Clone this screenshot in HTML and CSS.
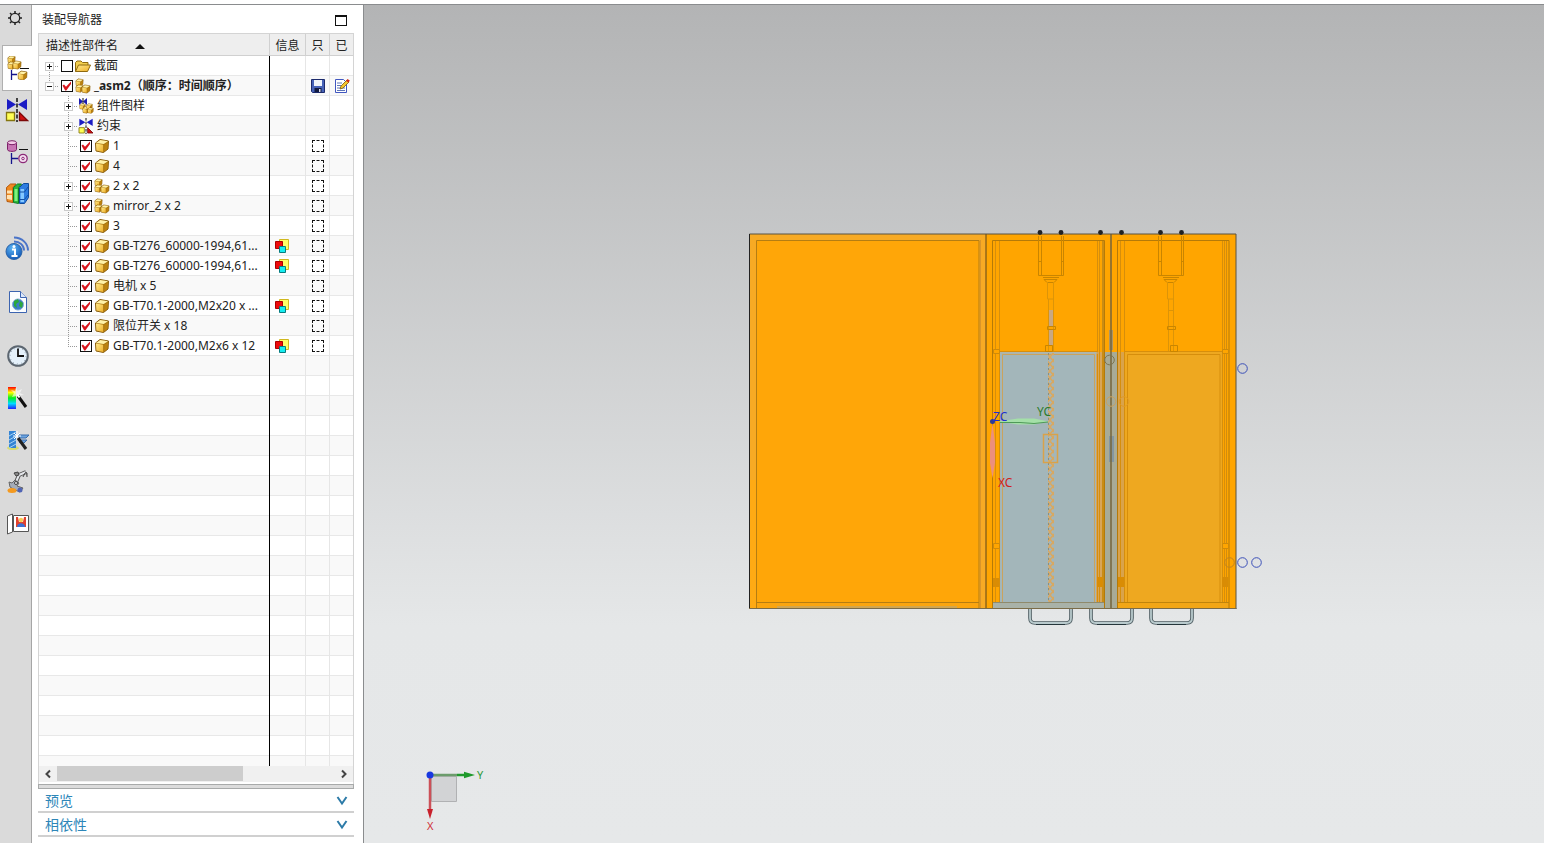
FILE: index.html
```html
<!DOCTYPE html>
<html lang="zh-CN">
<head>
  <meta charset="UTF-8">
  <meta name="viewport" content="width=device-width, initial-scale=1.0">
  <title>装配导航器</title>
  <link rel="stylesheet" href="styles.css">
</head>
<body>
  <svg class="defs" aria-hidden="true">
    <defs>
      <linearGradient id="gold" x1="0" y1="0" x2="1" y2="1">
        <stop offset="0" stop-color="#ffe98a"/>
        <stop offset="1" stop-color="#eeb02a"/>
      </linearGradient>
      <linearGradient id="rainbow" x1="0" y1="0" x2="0" y2="1">
        <stop offset="0" stop-color="#f00"/>
        <stop offset=".25" stop-color="#ff0"/>
        <stop offset=".5" stop-color="#0e2"/>
        <stop offset=".75" stop-color="#0df"/>
        <stop offset="1" stop-color="#22f"/>
      </linearGradient>
      <radialGradient id="ball" cx=".4" cy=".3" r=".8">
        <stop offset="0" stop-color="#5cb4f4"/>
        <stop offset="1" stop-color="#0b4fb0"/>
      </radialGradient>
      <symbol id="cube" viewBox="0 0 16 16">
        <path d="M1.500 5L6 1.500L14.500 3L14 11L9.500 14.500L2 13Z" fill="#a87410" stroke="#8a5e0c"/>
        <path d="M2 5L6.200 2L14 3.300L9.700 6Z" fill="#fff2a8"/>
        <path d="M2 5.600L9.200 6.800V14L2.400 12.600Z" fill="url(#gold)"/>
        <path d="M10.200 6.800L14 4.300L13.500 10.800L10.200 13.500Z" fill="#bc8210"/>
      </symbol>
      <symbol id="asm" viewBox="0 0 16 16">
        <use href="#cube" x="0" y="0" width="9" height="9"/>
        <use href="#cube" x="0" y="6" width="9" height="9"/>
        <use href="#cube" x="6" y="6" width="10" height="10"/>
      </symbol>
      <symbol id="folder" viewBox="0 0 16 16">
        <path d="M.5 13.500V4.500L2 3h4l1.500 1.500H13V7" fill="#f3cf4e" stroke="#8f6a10"/>
        <path d="M.5 13.500L3.500 7h12l-3 6.500Z" fill="url(#gold)" stroke="#8f6a10"/>
      </symbol>
      <symbol id="pattern" viewBox="0 0 16 16">
        <path d="M1 0l4 3.500L1 7zM9 0L5 3.500L9 7z" fill="#1c1cae"/>
        <path d="M5 0v8" stroke="#111"/>
        <use href="#cube" x="1" y="5" width="7" height="7"/>
        <use href="#cube" x="4" y="8" width="8" height="8"/>
        <use href="#cube" x="8" y="5" width="7" height="7"/>
        <use href="#cube" x="9" y="9" width="7" height="7"/>
      </symbol>
      <symbol id="constraint" viewBox="0 0 24 24">
        <path d="M2 1l9 5.500L2 12zM22 1l-9 5.500L22 12z" fill="#1c1cc4"/>
        <path d="M12 0v24" stroke="#111" stroke-width="1.500" stroke-dasharray="4 1.500"/>
        <path d="M1.500 14.500h8v8h-8z" fill="#ffff54" stroke="#857610" stroke-width="1.300"/>
        <path d="M14.500 14.500v8h8z" fill="#d11010" stroke="#7c0808" stroke-width="1.300"/>
      </symbol>
      <symbol id="save" viewBox="0 0 16 16">
        <path d="M1.500 1.500h13v13h-12l-1-1z" fill="#4662b8" stroke="#1c2a6c"/>
        <path d="M4 2h8v6H4z" fill="#eef3fa"/>
        <path d="M4.500 10h7v4h-7z" fill="#111a40"/>
        <path d="M9 11h1.500v3H9z" fill="#dde"/>
      </symbol>
      <symbol id="edit" viewBox="0 0 16 16">
        <path d="M1.500 1.500h8l3 3v10h-11z" fill="#fff" stroke="#4157c0"/>
        <path d="M3 5h5M3 7.500h4M3 10h8M3 12.500h8" stroke="#5e75b8"/>
        <path d="M6 11l1-3 6-6 2 2-6 6z" fill="#f5c52c" stroke="#7c5a10" stroke-width=".8"/>
        <path d="M12 3l1.500-2 2.300 1.500L14.500 4.500z" fill="#d02818"/>
      </symbol>
      <symbol id="status" viewBox="0 0 16 16">
        <path d="M5.500 1.500h9v10h-9z" fill="#ffff66" stroke="#d0b820"/>
        <path d="M1.500 3.500h7v7h-7z" fill="#ee0c0c" stroke="#a00"/>
        <path d="M5.500 8.500h6v6h-6z" fill="#15eef0" stroke="#087c80"/>
      </symbol>
    </defs>
  </svg>

  <div class="top-edge"></div>
  <div class="app">
    <nav class="resource-bar" aria-label="资源条">
      <button class="gear" type="button" aria-label="选项">
        <svg width="14" height="14" viewBox="0 0 14 14"><circle cx="7" cy="7" r="4.700" fill="none" stroke="#222" stroke-width="1.300"/><path d="M7 0v2.500M7 11.500V14M0 7h2.500M11.500 7H14M2 2l1.800 1.800M10.200 10.200L12 12M12 2l-1.800 1.800M3.800 10.200L2 12" stroke="#222" stroke-width="1.500"/></svg>
      </button>
      <button class="tab active" type="button" aria-label="装配导航器">
        <svg width="24" height="24" viewBox="0 0 24 24"><use href="#cube" x="2" y="-1" width="9" height="9"/><use href="#cube" x="2" y="5" width="9" height="9"/><use href="#cube" x="7" y="4" width="10" height="10"/><path d="M15 12.500h9" stroke="#111"/><path d="M6.500 14v10M7 18.500h5" stroke="#14148c" stroke-width="1.300"/><use href="#cube" x="12" y="14" width="11" height="11"/></svg>
      </button>
      <button class="tab" type="button" aria-label="约束导航器">
        <svg width="24" height="24"><use href="#constraint"/></svg>
      </button>
      <button class="tab" type="button" aria-label="部件导航器">
        <svg width="24" height="24" viewBox="0 0 24 24"><path d="M2.500 2.500v7c0 2.500 9 2.500 9 0v-7" fill="#c874b4" stroke="#7c2068"/><ellipse cx="7" cy="2.700" rx="4.500" ry="2" fill="#f4cce8" stroke="#7c2068"/><path d="M14 9.500h9" stroke="#111"/><path d="M6.500 13v11M7 18.500h6" stroke="#14148c" stroke-width="1.300"/><circle cx="18" cy="18.500" r="4.200" fill="#f4dff0" stroke="#8c2a78" stroke-width="1.300"/><circle cx="18" cy="18.500" r="1.300" fill="none" stroke="#8c2a78"/></svg>
      </button>
      <button class="tab" type="button" aria-label="重用库">
        <svg width="24" height="24" viewBox="0 0 24 24"><path d="M1.500 5.500l4-3.500h5.500l-3 3.500v15l-6-1z" fill="#f08a20" stroke="#b4580c"/><path d="M2 8.500h5v3H2zM2 13h5v5l-5-1z" fill="#ffe2b0"/><path d="M8.500 5.500l4-3.500h4l-3 3.500v16l-5-1z" fill="#2cb83c" stroke="#0c7c20"/><path d="M9.500 7h3v12h-3z" fill="#7cf47c"/><path d="M14.500 5.500l4-4h5v14l-4 6h-5z" fill="#2c7ce0" stroke="#104c9c"/><path d="M15.500 7h3.500v13h-3.500z" fill="#84c8ff"/><path d="M15 10h4.500l3.500-5M15 17.500h4.500l3.500-4.500" fill="none" stroke="#1450a4"/></svg>
      </button>
      <button class="tab spaced" type="button" aria-label="HD3D 工具">
        <svg width="24" height="24" viewBox="0 0 24 24"><path d="M9 1.500c8 0 14 6 14 13M9 5.500c6 0 10 4 10 9" fill="none" stroke="#4a74c8" stroke-width="2"/><circle cx="9" cy="15.500" r="8" fill="url(#ball)" stroke="#2c64a8"/><path d="M7 13.500h3v6M6.500 20h6" fill="none" stroke="#fff" stroke-width="2"/><circle cx="9" cy="10.500" r="1.500" fill="#fff"/></svg>
      </button>
      <button class="tab spaced" type="button" aria-label="Web 浏览器">
        <svg width="24" height="24" viewBox="0 0 24 24"><path d="M4.500 1.500h11l6 6v15h-17z" fill="#fbfdff" stroke="#3c64b0"/><path d="M15.500 1.500v6h6" fill="#dce8fa" stroke="#3c64b0"/><circle cx="13" cy="14.500" r="5.500" fill="#3c7cc8" stroke="#84aad4"/><path d="M9 11l4-2 1 3-3 2 1 4-3-2zM15 11l3 2-1 5-3-2z" fill="#2ca83c"/></svg>
      </button>
      <button class="tab spaced" type="button" aria-label="历史记录">
        <svg width="24" height="24" viewBox="0 0 24 24"><circle cx="13" cy="12" r="9.800" fill="#e4f0fa" stroke="#5c6670" stroke-width="2"/><circle cx="13" cy="12" r="8" fill="none" stroke="#8898a8" stroke-dasharray="1 3.190"/><path d="M13 4.500V12h6" fill="none" stroke="#111" stroke-width="1.800"/></svg>
      </button>
      <button class="tab" type="button" aria-label="Process Studio">
        <svg width="24" height="24" viewBox="0 0 24 24"><path d="M3 1h8v22H3z" fill="url(#rainbow)"/><path d="M11 1l1.500 4L17 3l-2 4 4 2-5 .5L12 14l-1-4-4 1 2-4-3-3 4 1z" fill="#fff" opacity=".6"/><path d="M13 10l8 11" stroke="#111" stroke-width="3"/><path d="M12.500 8.500l2 3" stroke="#fff" stroke-width="2"/></svg>
      </button>
      <button class="tab" type="button" aria-label="加工向导">
        <svg width="24" height="24" viewBox="0 0 24 24"><ellipse cx="8" cy="20" rx="6" ry="2" fill="#d8dc70"/><path d="M4 3h7v17H4z" fill="#3484d4"/><path d="M4 8l7-4M4 12l7-4M4 16l7-4M4 20l7-4" stroke="#a8d4f4"/><path d="M13 7h11l-3 3h-7zM14 12h8l-3 3h-4z" fill="#6ca4e0" stroke="#386cac"/><path d="M12 3v9M8 8h8M9 5l6 6M15 5l-6 6" stroke="#fff"/><path d="M13 10l8 11" stroke="#222" stroke-width="3"/></svg>
      </button>
      <button class="tab" type="button" aria-label="机器人">
        <svg width="24" height="24" viewBox="0 0 24 24"><path d="M11 12l3-7M14 5l7-3" stroke="#555" stroke-width="4"/><path d="M11 12l3-7M14 5l7-3" stroke="#e4e6ea" stroke-width="2"/><path d="M9 3l4-1 1 3-3 1zM20 2l2 1v4M20 3l-2 4" fill="#888" stroke="#444"/><path d="M4 12l3 1 3-3 4 3-2 3 6 2-3 4-5-2-5-3z" fill="#a4acb8" stroke="#666"/><ellipse cx="7" cy="20.500" rx="4.500" ry="2.500" fill="#f49a20"/><circle cx="15" cy="20" r="2.500" fill="#5064b4"/><circle cx="11" cy="13" r="1.500" fill="#eee" stroke="#444"/></svg>
      </button>
      <button class="tab" type="button" aria-label="角色">
        <svg width="24" height="24" viewBox="0 0 24 24"><path d="M2.500 4l5-2v18l-5 2z" fill="#fff" stroke="#555"/><path d="M8.500 3.500h15v16h-15z" fill="#fff" stroke="#555"/><path d="M11 5h10v10H11z" fill="#e2412c"/><path d="M13 5h6l-1 5h-4z" fill="#fff"/><circle cx="16" cy="8" r="2.200" fill="#f8cc54"/><path d="M12 15c0-5 8-5 8 0z" fill="#3c70d4"/></svg>
      </button>
    </nav>

    <aside class="panel">
      <header class="panel-title">
        <h1>装配导航器</h1>
        <button class="maximize" type="button" aria-label="最大化"></button>
      </header>

      <div class="tree-frame">
        <div class="tree-view">
          <table class="tree">
            <colgroup>
              <col>
              <col class="col-info">
              <col class="col-flag">
              <col class="col-last">
            </colgroup>
            <thead>
              <tr>
                <th>描述性部件名 <span class="sort"></span></th>
                <th>信息</th>
                <th>只</th>
                <th>已</th>
              </tr>
            </thead>
            <tbody id="treeBody"></tbody>
          </table>
        </div>
        <div class="scrollbar">
          <button type="button" aria-label="向左"><svg width="8" height="10" viewBox="0 0 8 10"><path d="M6 1.500L2.500 5L6 8.500" fill="none" stroke="#444" stroke-width="2"/></svg></button>
          <div class="track"><div class="thumb"></div></div>
          <button type="button" aria-label="向右"><svg width="8" height="10" viewBox="0 0 8 10"><path d="M2 1.500L5.500 5L2 8.500" fill="none" stroke="#444" stroke-width="2"/></svg></button>
        </div>
      </div>
      <div class="splitter"></div>
      <button class="section" type="button">预览 <svg width="12" height="10" viewBox="0 0 12 10"><path d="M1.500 1L6 7.500l4.500-6.500" fill="none" stroke="#2d7ba8" stroke-width="2"/></svg></button>
      <button class="section" type="button">相依性 <svg width="12" height="10" viewBox="0 0 12 10"><path d="M1.500 1L6 7.500l4.500-6.500" fill="none" stroke="#2d7ba8" stroke-width="2"/></svg></button>
    </aside>

    <main class="viewport">
      <svg class="scene" viewBox="364 5 1180 838" role="img" aria-label="_asm2">
        <defs>
          <pattern id="thread" width="6" height="7" patternUnits="userSpaceOnUse">
            <path d="M0 0l6 7M0 7l6-7" stroke="#d9a860" stroke-width="1.500"/>
          </pattern>
          <g id="motor" fill="none" stroke="#c98500">
            <path d="M1038.500 236v39.500h25V236M1041.500 236v39M1061.500 236v39" />
            <path d="M1038 261.500h4M1061 261.500h3"/>
            <path d="M1043 277.500h16M1044 279.500h13l-3 3h-7z"/>
            <path d="M1047.500 282v17h6v-17M1048.500 299v52M1053.500 299v52M1048 310.500h6" stroke="#dc9408"/>
            <path d="M1047.500 326.500h8v3h-8z"/>
          </g>
          <g id="handle" fill="none">
            <path d="M1030 609v9q0 5 5 5h31q5 0 5-5v-9" stroke="#4c5b60" stroke-width="3.600"/>
            <path d="M1030 609v9q0 5 5 5h31q5 0 5-5v-9" stroke="#b9cacd" stroke-width="1.800"/>
            <path d="M1036 624.500h29" stroke="#26363c"/>
          </g>
        </defs>

        <!-- left cabinet -->
        <path d="M749.500 234h236.500v375H749.500z" fill="#f7aa24"/>
        <path d="M750 480h6v128h-6z" fill="#ffaa14"/>
        <path d="M756 241h223v361H756z" fill="#ffa608"/>
        <path d="M756 602h223v6H756z" fill="#fba50f"/>
        <path d="M777 606h180v2H777z" fill="#d2a650"/>
        <path d="M756.500 608V240.500h222.500V608M756 602.500h223" fill="none" stroke="#b57d12"/>
        <path d="M980.500 240v368" stroke="#d9952a"/>

        <!-- middle and right cabinets -->
        <path d="M986 234h250v375H986z" fill="#ffa500"/>
        <path d="M1104 352h14v256h-14z" fill="#a8ab97"/>
        <path d="M1096 352h8v250h-8z" fill="#d8a558"/>
        <path d="M1118 352h7v250h-7z" fill="#d9a34c"/>
        <path d="M1000 352h96v250h-96z" fill="#a3b6ba"/>
        <path d="M993 602h111v6H993z" fill="#a9b2a8"/>
        <path d="M1125 352h97v250h-97z" fill="#eea820"/>
        <path d="M1118 602h111v6h-111z" fill="#f2a616"/>
        <g fill="none" stroke="#b57a08">
          <path d="M992.500 608V240.500h112V608M1117.500 608V240.500h111.500V608"/>
          <path d="M993 602.500h111" stroke="#8f8a6c"/>
          <path d="M1118 602.500h111" stroke="#bf840c"/>
          <path d="M1103 241v361" stroke="#c98c14" stroke-width="2"/>
        </g>
        <g fill="none" stroke="#d68e0c">
          <path d="M995.500 241v361M999.500 241v361M1097.500 241v361M1099.500 241v361"/>
          <path d="M1120.500 241v361M1124.500 241v361M1222.500 241v361M1224.500 241v361"/>
          <path d="M1000 351.500h98M1124 351.500h98M1127.500 602V354.500h92.500V602"/>
          <path d="M1002.500 602V354.500h92V602" stroke="#c9a35e"/>
        </g>
        <path d="M1000 353h98" stroke="#b8b4a0"/>
        <path d="M1226.500 241v361" stroke="#d08c10"/>
        <g fill="#ffa500" stroke="#d08a08">
          <path d="M993.500 349.500h6v4h-6zM1222.500 349.500h6v4h-6zM993.500 543.500h6v5h-6zM1222.500 543.500h6v5h-6z"/>
        </g>
        <path d="M993 578h6v9h-6zM1097 577h6v10h-6zM1118 577h6v10h-6zM1222 577h6v10h-6z" fill="#d98c04"/>

        <use href="#motor"/>
        <use href="#motor" x="120"/>
        <path d="M1045.500 345.500h7v6h-7zM1170.500 345.500h7v6h-7z" fill="none" stroke="#c98500"/>
        <path d="M1049 310h4v16h-4zM1049 330h4v15h-4z" fill="#c9a882"/>
        <path d="M1048 353h6v249h-6z" fill="url(#thread)"/>
        <path d="M1048.500 353v249" stroke="#8a8f80" stroke-dasharray="2 3"/>
        <path d="M1043.500 434.500h14v28h-14z" fill="none" stroke="#d9a24a" stroke-width="1.500"/>

        <path d="M1109 330h4v20h-4z" fill="#a89468"/>
        <path d="M1109 436h5v26h-5z" fill="#8496a0"/>
        <g fill="none">
          <path d="M1111 234v375" stroke="#75643c" stroke-width="1.500"/>
          <path d="M986 234v375" stroke="#5c4618"/>
          <path d="M749.500 609V234h486.500v375" stroke="#5b5340"/>
          <path d="M749.500 234v375" stroke="#222"/>
          <path d="M749 608.500h487.500" stroke="#7b6c48"/>
        </g>

        <g fill="#222">
          <circle cx="1040" cy="232.500" r="2.400"/>
          <circle cx="1061" cy="232.500" r="2.400"/>
          <circle cx="1100.500" cy="232.500" r="2.400"/>
          <circle cx="1121.500" cy="232.500" r="2.400"/>
          <circle cx="1160.500" cy="232.500" r="2.400"/>
          <circle cx="1181.500" cy="232.500" r="2.400"/>
        </g>
        <use href="#handle"/>
        <use href="#handle" x="61"/>
        <use href="#handle" x="121"/>

        <g fill="none" stroke="#3a4fb8">
          <circle cx="1242.500" cy="368.500" r="4.800"/>
          <circle cx="1242.500" cy="562.500" r="4.800"/>
          <circle cx="1256.500" cy="562.500" r="4.800"/>
          <circle cx="1109.500" cy="360" r="4.800" stroke="#7c7450"/>
          <circle cx="1229.500" cy="562.500" r="4.800" stroke="#c08420"/>
          <circle cx="1111" cy="401.500" r="4.800" stroke="#c8a260"/>
          <circle cx="1124" cy="401.500" r="4.800" stroke="#e09a28"/>
        </g>

        <!-- work coordinate system -->
        <path d="M998 421.500L1018 418.500H1034L1049 421.500L1034 424.500H1018Z" fill="#a4e0a8"/>
        <path d="M1000 422.500h20l14 1 14-1.500" fill="none" stroke="#4e9a58"/>
        <path d="M992.500 423l2.500 20v20l-2.500 15-2.500-15v-20z" fill="#ec8f7c"/>
        <circle cx="992.500" cy="421.500" r="2.500" fill="#2c3c94"/>
        <text x="993" y="421" fill="#1f2fd0">ZC</text>
        <text x="1037" y="416" fill="#2c7c2c">YC</text>
        <text x="998" y="487" fill="#d02020">XC</text>

        <!-- view triad -->
        <path d="M431.500 776.500h25v25h-25z" fill="#d2d3d5" stroke="#b0b1b3"/>
        <path d="M431 775h26" stroke="#6c9c6c" stroke-width="2.500"/>
        <path d="M457 773.800l7 0v-2l11 3.200-11 3.200v-2h-7z" fill="#1f9a2c"/>
        <path d="M430 777v32" stroke="#cc5058" stroke-width="2.500"/>
        <path d="M427 809h6l-3 10z" fill="#c8202c"/>
        <circle cx="430" cy="775" r="3.500" fill="#1838e0"/>
        <text class="small" x="477" y="779" fill="#2f9a3c">Y</text>
        <text class="small" x="427" y="830" fill="#d03038">X</text>
      </svg>
    </main>
  </div>

  <script>
    var parts = [
      { name: '截面', level: 0, icon: 'folder', check: false, expand: '+' },
      { name: '_asm2（顺序：时间顺序）', level: 0, icon: 'asm', check: true, expand: '-', root: true },
      { name: '组件图样', level: 1, icon: 'pattern', expand: '+' },
      { name: '约束', level: 1, icon: 'constraint', expand: '+' },
      { name: '1', level: 1, icon: 'cube', check: true },
      { name: '4', level: 1, icon: 'cube', check: true },
      { name: '2 x 2', level: 1, icon: 'asm', check: true, expand: '+' },
      { name: 'mirror_2 x 2', level: 1, icon: 'asm', check: true, expand: '+' },
      { name: '3', level: 1, icon: 'cube', check: true },
      { name: 'GB-T276_60000-1994,61...', level: 1, icon: 'cube', check: true, status: true },
      { name: 'GB-T276_60000-1994,61...', level: 1, icon: 'cube', check: true, status: true },
      { name: '电机 x 5', level: 1, icon: 'cube', check: true },
      { name: 'GB-T70.1-2000,M2x20 x ...', level: 1, icon: 'cube', check: true, status: true },
      { name: '限位开关 x 18', level: 1, icon: 'cube', check: true },
      { name: 'GB-T70.1-2000,M2x6 x 12', level: 1, icon: 'cube', check: true, status: true }
    ];

    function icon(id) {
      return '<svg class="icon" width="16" height="16"><use href="#' + id + '"/></svg>';
    }

    function guide(part, i) {
      var cls = 'guide';
      if (i === 0) cls += ' first';
      if (i === 1 || i === parts.length - 1) cls += ' last';
      if (part.check === undefined) cls += ' narrow';
      var button = '';
      if (part.expand) {
        button = '<button type="button" class="expander' + (part.expand === '+' ? ' closed' : '') + '" aria-label="展开"></button>';
      }
      return '<span class="' + cls + '">' + button + '</span>';
    }

    var html = '';
    parts.forEach(function(part, i) {
      var box = '';
      if (part.check !== undefined) {
        box = '<input type="checkbox" id="part' + i + '"' + (part.check ? ' checked' : '') + '>';
      }
      var name = part.check !== undefined ? '<label for="part' + i + '">' + part.name + '</label>' : '<span>' + part.name + '</span>';
      var flag = part.root ? icon('save') : (part.level === 1 && box ? '<span class="dashed"></span>' : '');
      html += '<tr><td><div class="node level' + part.level + (part.root ? ' root' : '') + '">' +
        guide(part, i) + box + icon(part.icon) + name + '</div></td>' +
        '<td>' + (part.status ? icon('status') : '') + '</td>' +
        '<td>' + flag + '</td>' +
        '<td>' + (part.root ? icon('edit') : '') + '</td></tr>';
    });
    // empty rows down to the bottom of the list
    for (var i = 0; i < 60; i++) {
      html += '<tr><td></td><td></td><td></td><td></td></tr>';
    }
    document.getElementById('treeBody').innerHTML = html;
  </script>
</body>
</html>
```

FILE: styles.css
```css
* {
  box-sizing: border-box;
}
body {
  margin: 0;
  height: 100vh;
  display: flex;
  flex-direction: column;
  overflow: hidden;
  background: #fff;
  color: #222;
  font-family: "Noto Sans", "Noto Sans CJK SC", sans-serif;
  font-size: 12px;
  line-height: 20px;
}
button {
  border: none;
  padding: 0;
  background: none;
  font: inherit;
  color: inherit;
}
svg {
  display: block;
}
.defs {
  position: absolute;
  width: 0;
  height: 0;
}
.top-edge {
  flex: none;
  height: 5px;
  border-bottom: 1px solid #8a8c8e;
}
.app {
  flex: 1;
  min-height: 0;
  display: flex;
}

/* resource bar */
.resource-bar {
  flex: none;
  width: 32px;
  padding-left: 2px;
  display: flex;
  flex-direction: column;
  background: #dadada;
  border-right: 1px solid #a6a6a6;
}
.gear {
  width: 26px;
  height: 26px;
  margin-bottom: 14px;
  display: flex;
  align-items: center;
  justify-content: center;
}
.tab {
  flex: none;
  height: 42px;
  padding-left: 3px;
  display: flex;
  align-items: center;
}
.tab.active {
  height: 46px;
  margin-right: -1px;
  margin-bottom: -2px;
  background: #fff;
  border: 1px solid #b0b0b0;
  border-right: none;
  padding-left: 2px;
}
.tab.spaced {
  margin-top: 12px;
}

/* navigator panel */
.panel {
  flex: none;
  width: 332px;
  padding: 0 9px 6px 6px;
  display: flex;
  flex-direction: column;
  background: #fff;
  border-right: 1px solid #8a8c8e;
}
.panel-title {
  height: 28px;
  padding: 2px 7px 0 4px;
  display: flex;
  align-items: center;
  justify-content: space-between;
}
.panel-title h1 {
  margin: 0;
  font-size: 12px;
  font-weight: normal;
}
.maximize {
  width: 12px;
  height: 11px;
  border: 1px solid #111;
  border-top-width: 2px;
}
.tree-frame {
  flex: 1;
  min-height: 0;
  display: flex;
  flex-direction: column;
  border: 1px solid #d4d4d4;
  border-bottom: none;
}
.tree-view {
  flex: 1;
  min-height: 0;
  overflow: hidden;
}
.tree {
  width: 100%;
  table-layout: fixed;
  border-collapse: separate;
  border-spacing: 0;
}
.col-info {
  width: 36px;
}
.col-flag {
  width: 24px;
}
.col-last {
  width: 23px;
}
.tree th {
  height: 22px;
  padding: 1px 0 0;
  line-height: 20px;
  font-weight: normal;
  background: #eee;
  border-right: 1px solid #d0d0d0;
  box-shadow: inset 0 -1px #d0d0d0;
}
.tree th:first-child {
  padding-left: 7px;
  text-align: left;
}
.sort {
  display: inline-block;
  margin-left: 14px;
  vertical-align: middle;
  border: 5px solid transparent;
  border-top: none;
  border-bottom-color: #111;
}
.tree td {
  height: 20px;
  padding: 0;
  border-right: 1px solid #e6e6e6;
  box-shadow: inset 0 -1px #e8e8e8;
}
.tree td:first-child {
  border-right-color: #000;
}
.tree th:last-child,
.tree td:last-child {
  border-right: none;
}
.tree tr:nth-child(even) td {
  background: #f9f9f9;
}
.tree td > .icon,
.dashed {
  margin: 0 auto;
}
.tree td:nth-child(2) > .icon {
  margin-left: 4px;
}
.dashed {
  display: block;
  width: 12px;
  height: 12px;
  border: 1px dashed #111;
}

.node {
  height: 20px;
  display: flex;
  align-items: center;
  white-space: nowrap;
}
.node.level1 {
  padding-left: 19px;
}
.node.root {
  font-weight: bold;
}
.node .icon {
  flex: none;
  margin: 0 3px 0 2px;
}
.node .guide.narrow + .icon {
  margin-left: 0;
}
.guide {
  flex: none;
  width: 22px;
  height: 20px;
  padding: 6px 0 0 6px;
  background:
    repeating-linear-gradient(to bottom, #999 0 1px, transparent 1px 2px) 10px 0 / 1px 20px no-repeat,
    repeating-linear-gradient(to right, #999 0 1px, transparent 1px 2px) 10px 10px / 9px 1px no-repeat;
}
.guide.narrow {
  width: 20px;
}
.guide.first {
  background-position: 10px 10px;
}
.guide.last {
  background-size: 1px 10px, 9px 1px;
}
.expander {
  display: block;
  width: 9px;
  height: 9px;
  border: 1px solid #ccc;
  background: linear-gradient(#111, #111) center / 5px 1px no-repeat, #fff;
}
.expander.closed {
  background: linear-gradient(#111, #111) center / 5px 1px no-repeat, linear-gradient(#111, #111) center / 1px 5px no-repeat, #fff;
}
.node input {
  flex: none;
  appearance: none;
  width: 12px;
  height: 12px;
  margin: 0;
  border: 1px solid #111;
  background: #fff;
}
.node input:checked {
  background: #fff url("data:image/svg+xml,%3Csvg xmlns='http://www.w3.org/2000/svg' viewBox='0 0 10 10'%3E%3Cpath d='M.5 4.500L2 3.500L4 5.800L9 .5V3L4.300 9.500H3.200Z' fill='%23d8141c'/%3E%3C/svg%3E") center / 10px 10px no-repeat;
}

.scrollbar {
  flex: none;
  height: 16px;
  margin-bottom: 2px;
  display: flex;
  background: #f0f0f0;
}
.scrollbar button {
  width: 18px;
  display: flex;
  align-items: center;
  justify-content: center;
}
.track {
  flex: 1;
}
.thumb {
  width: 67%;
  height: 15px;
  background: #cdcdcd;
}
.splitter {
  flex: none;
  height: 5px;
  background: #dcdcdc;
  border: 1px solid #a8aaaa;
}
.section {
  flex: none;
  height: 24px;
  padding: 2px 6px 0 7px;
  display: flex;
  align-items: center;
  justify-content: space-between;
  border-bottom: 2px solid #d0d0d0;
  color: #2d86b8;
  font-size: 14px;
}

/* graphics window */
.viewport {
  flex: 1;
  min-width: 0;
  background: linear-gradient(#b3b4b5, #e5e7e8 74%, #e6e8e9);
}
.scene {
  width: 100%;
  height: 100%;
  font-size: 12px;
}
.scene .small {
  font-size: 11px;
}
```
